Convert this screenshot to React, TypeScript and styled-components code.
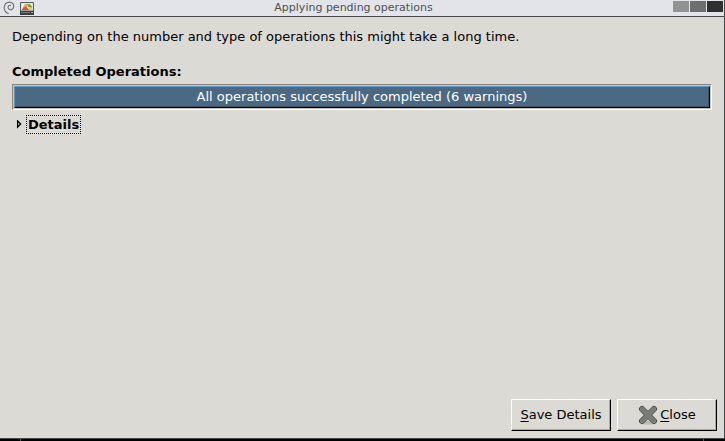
import React from "react";
import styled, { createGlobalStyle } from "styled-components";

const GlobalStyle = createGlobalStyle`
  *, *::before, *::after { box-sizing: border-box; }
  body {
    margin: 0;
    background: #000;
    color: #000;
    font-family: "DejaVu Sans", sans-serif;
    font-size: 13px;
    line-height: 16px;
  }
`;

const Desktop = styled.div`
  display: flex;
  flex-direction: column;
  min-height: 100vh;
`;

const Window = styled.main`
  flex: 1;
  display: flex;
  flex-direction: column;
  background: #dcdad5;
  border-right: 1px solid #4a4a4a;
  border-bottom: 1px solid #4a4a4a;
`;

const TitleBar = styled.header`
  display: grid;
  grid-template-columns: auto 1fr auto;
  align-items: center;
  height: 17px;
  padding: 0 1px 0 3px;
  background: #e2e4ea;
  border-bottom: 1px solid #4a4a4a;
`;

const TitleIcons = styled.div`
  display: flex;
  align-items: center;
  gap: 5px;

  svg { display: block; }
`;

const Title = styled.h1`
  margin: 0;
  color: #505050;
  font-size: 11px;
  font-weight: 400;
  line-height: 14px;
  text-align: center;
`;

const WindowControls = styled.div`
  display: flex;
  justify-content: flex-end;
  align-self: start;
  gap: 1px;
  padding-top: 1px;
`;

const WindowControl = styled.button<{ $color: string }>`
  width: 16px;
  height: 11px;
  padding: 0;
  border: 0;
  background: ${({ $color }) => $color};
`;

const Content = styled.section`
  flex: 1;
  padding: 12px 12px 0;
`;

const Message = styled.p`
  margin: 0;
`;

const Heading = styled.h2`
  margin: 19px 0 4px;
  font-size: 13px;
  font-weight: 700;
`;

const Trough = styled.div`
  padding: 1px;
  border: 1px solid;
  border-color: #8a877f #fff #fff #8a877f;
  background: #c6c2b8;
`;

const ProgressFill = styled.div`
  height: 22px;
  border: 1px solid;
  border-color: #6699c5 #000 #000 #6699c5;
  box-shadow: inset -1px -1px #3b5368;
  background: #4b6983;
  color: #fff;
  line-height: 20px;
  text-align: center;
`;

const Expander = styled.button`
  display: flex;
  align-items: center;
  gap: 4px;
  margin: 5px 0 0 4px;
  padding: 0;
  border: 0;
  background: none;
  color: inherit;
  font: inherit;
  font-weight: 700;

  svg { display: block; }
`;

const FocusLabel = styled.span`
  border: 1px dotted #000;
  padding: 1px;
  line-height: 15px;
`;

const Actions = styled.footer`
  display: flex;
  justify-content: flex-end;
  gap: 6px;
  padding: 7px;
`;

const ActionButton = styled.button`
  display: flex;
  align-items: center;
  justify-content: center;
  gap: 2px;
  width: 100px;
  height: 32px;
  padding: 0;
  border: 1px solid;
  border-color: #fff #000 #000 #fff;
  box-shadow: inset -1px -1px #aba8a0;
  background: #dcdad5;
  color: inherit;
  font: inherit;
  white-space: nowrap;
`;

const Mnemonic = styled.span`
  text-decoration: underline;
  text-decoration-thickness: 1px;
  text-underline-offset: 2px;
`;

const Taskbar = styled.div`
  display: flex;
  justify-content: space-between;
  height: 2px;
  padding: 0 21px 0 20px;
`;

const TaskbarMark = styled.span`
  width: 1px;
  background: #555;
`;

const SwirlIcon = () => (
  <svg width="12" height="14" viewBox="0 0 12 14" fill="none" stroke="#6a6d73" strokeLinecap="round" aria-hidden="true">
    <path d="M5.2 12.6C2.4 11.2 1 8.8 1.2 6.2 1.5 3 4 1.1 6.7 1.2 9.5 1.3 11 3.4 10.7 5.7 10.4 7.9 8.4 9.2 6.7 8.5 5 7.9 4.6 6 5.6 4.9 6.2 4.2 7 4.1 7.7 4.4" strokeWidth="1.1" />
    <path d="M2.3 3.2C3.7 1.5 6 .6 8.3 1.5" strokeWidth=".8" />
  </svg>
);

const DiskIcon = () => (
  <svg width="14" height="13" viewBox="0 0 14 13" aria-hidden="true">
    <path d="M.5 .5H13.5V9H.5Z" fill="#dfe1db" stroke="#5b5e5a" />
    <path d="M2 2H12V8H2Z" fill="#f4f2e6" />
    <path d="M3 5C4 3 5 2 7 2V5L3 7Z" fill="#f19a4a" />
    <path d="M7 2H9C11 2.5 12 4 12 6L8 5Z" fill="#62ad48" />
    <path d="M8 5L12 6V8H9Z" fill="#ead15a" />
    <path d="M2 7L6 4.5 9 8H2Z" fill="#dd5138" />
    <path d="M0 9H14V13H0Z" fill="#3b3e3b" />
    <path d="M1 10.5H10" stroke="#747871" />
    <path d="M11 10.5H13" stroke="#aab0a4" />
  </svg>
);

const ExpanderIcon = () => (
  <svg width="6" height="9" viewBox="0 0 6 9" aria-hidden="true">
    <path d="M1.6 .9V7.1L4.6 4Z" fill="#dcdad5" stroke="#000" strokeWidth="1.3" />
  </svg>
);

const CloseIcon = () => (
  <svg width="20" height="20" viewBox="0 0 20 20" aria-hidden="true">
    <ellipse cx="10" cy="17.8" rx="7.5" ry="1.8" fill="#aaa9a4" opacity=".65" />
    <g fill="none" strokeLinecap="round">
      <path d="M4 4L16 16M16 4L4 16" stroke="#454744" strokeWidth="6" />
      <path d="M4 4L16 16M16 4L4 16" stroke="#8d8f8b" strokeWidth="4.2" />
      <path d="M4 4L16 16M16 4L4 16" stroke="#777a76" strokeWidth="2.8" />
    </g>
  </svg>
);

export default function App() {
  return (
    <Desktop>
      <GlobalStyle />
      <Window>
        <TitleBar>
          <TitleIcons>
            <SwirlIcon />
            <DiskIcon />
          </TitleIcons>
          <Title>Applying pending operations</Title>
          <WindowControls>
            <WindowControl $color="#929292" aria-label="Minimize" />
            <WindowControl $color="#6e6e6e" aria-label="Maximize" />
            <WindowControl $color="#303030" aria-label="Close window" />
          </WindowControls>
        </TitleBar>
        <Content>
          <Message>Depending on the number and type of operations this might take a long time.</Message>
          <Heading>Completed Operations:</Heading>
          <Trough
            role="progressbar"
            aria-valuenow={100}
            aria-valuetext="All operations successfully completed (6 warnings)"
          >
            <ProgressFill>All operations successfully completed (6 warnings)</ProgressFill>
          </Trough>
          <Expander aria-expanded={false}>
            <ExpanderIcon />
            <FocusLabel>Details</FocusLabel>
          </Expander>
        </Content>
        <Actions>
          <ActionButton>
            <span><Mnemonic>S</Mnemonic>ave Details</span>
          </ActionButton>
          <ActionButton>
            <CloseIcon />
            <span><Mnemonic>C</Mnemonic>lose</span>
          </ActionButton>
        </Actions>
      </Window>
      <Taskbar>
        <TaskbarMark />
        <TaskbarMark />
      </Taskbar>
    </Desktop>
  );
}
